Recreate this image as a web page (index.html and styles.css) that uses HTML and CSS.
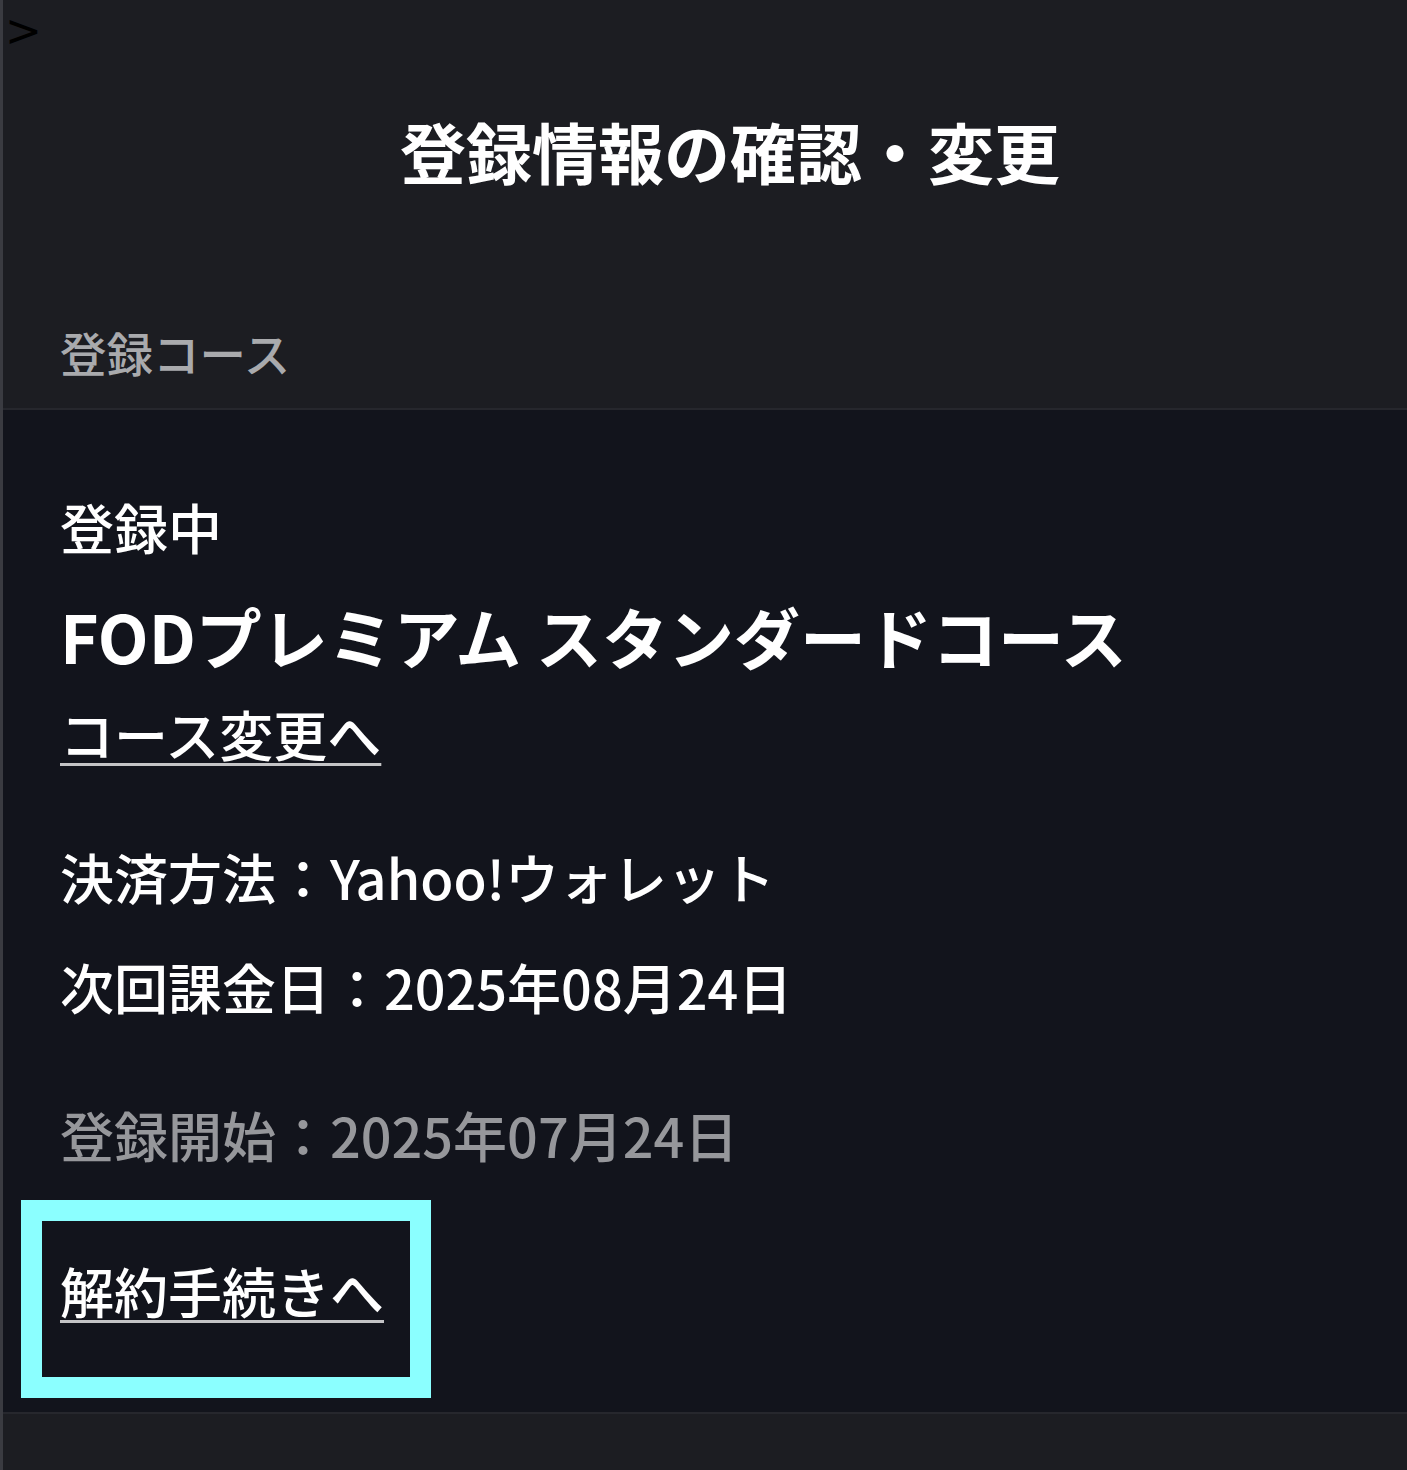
FILE: index.html
```html
<!DOCTYPE html>
<html lang="ja">
<head>
<meta charset="utf-8">
<title>登録情報の確認・変更</title>
<link rel="stylesheet" href="styles.css">
</head>
<body>
<div class="page">
  <header class="top">
    <div class="stray-row"><span class="stray">&gt;</span></div>
    <h1 class="title">登録情報の確認・変更</h1>
    <div class="section-label">登録コース</div>
  </header>
  <main class="course-panel">
    <div class="row status">登録中</div>
    <div class="row course-name">FODプレミアム スタンダードコース</div>
    <div class="row change"><a class="link" href="#">コース変更へ</a></div>
    <div class="row pay">決済方法：Yahoo!ウォレット</div>
    <div class="row next">次回課金日：2025年08月24日</div>
    <div class="row started">登録開始：2025年07月24日</div>
    <div class="cancel-box"><a class="link" href="#">解約手続きへ</a></div>
  </main>
  <div class="bottom"></div>
</div>
</body>
</html>
```

FILE: styles.css
```css
html, body {
  margin: 0;
  padding: 0;
  background: #1c1d22;
}
body {
  font-family: "Noto Sans CJK JP", "Noto Sans", sans-serif;
  color: #ffffff;
}
.page {
  border-left: 3px solid #3a3b41;
  min-height: 1470px;
  box-sizing: border-box;
  background: #1c1d22;
}
.top {
  border-bottom: 2px solid #26272d;
  padding-bottom: 16px;
}
.stray-row {
  height: 66px;
  line-height: 62px;
  padding-left: 2px;
}
.stray {
  font-family: "DejaVu Sans", sans-serif;
  font-size: 44px;
  color: #000000;
}
.title {
  margin: 4px 0 0 0;
  font-size: 66px;
  font-weight: 700;
  line-height: 160px;
  text-align: center;
  padding-left: 50px;
}
.section-label {
  margin-top: 82px;
  line-height: 80px;
  font-size: 46.5px;
  font-weight: 500;
  color: #a9aaad;
  padding-left: 57px;
}
.course-panel {
  background: #12141c;
  padding: 63px 0 14px 0;
  border-bottom: 2px solid #26272d;
}
.row {
  padding-left: 57px;
  font-size: 54px;
  font-weight: 500;
  line-height: 108px;
}
.course-name {
  font-size: 66px;
  font-weight: 700;
}
.change {
  line-height: 90px;
}
.link {
  color: #ffffff;
  text-decoration: underline;
  text-decoration-color: #c4c4c6;
  text-decoration-thickness: 3px;
  text-underline-offset: 6px;
}
.pay {
  margin-top: 43px;
  line-height: 110px;
}
.next {
  line-height: 110px;
}
.started {
  margin-top: 38px;
  line-height: 110px;
  color: #96979b;
}
.cancel-box {
  display: inline-block;
  margin: 10px 0 0 18px;
  border: 21px solid #8bffff;
  padding: 29px 26px 45px 18px;
  font-size: 54px;
  font-weight: 500;
  line-height: 82px;
}
.bottom {
  height: 56px;
}
```
